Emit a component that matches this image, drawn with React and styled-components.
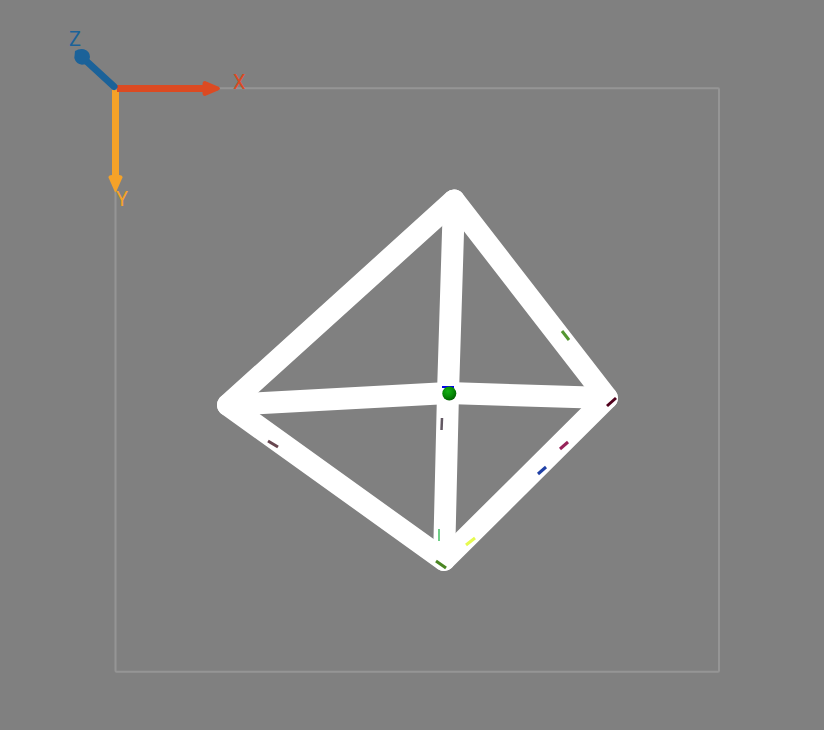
import React from "react";
import styled, { createGlobalStyle } from "styled-components";

const GlobalStyle = createGlobalStyle`
  body {
    margin: 0;
    background: #808080;
  }
`;

const Viewport = styled.main`
  display: flex;
  width: 100%;
  height: 100vh;
  overflow: hidden;
  background: #808080;
`;

const Scene = styled.svg`
  display: block;
  width: 100%;
  height: 100%;
`;

const Bounds = styled.rect`
  fill: none;
  stroke: #959595;
  stroke-width: 2px;
`;

const Beam = styled.path`
  fill: none;
  stroke: #ffffff;
  stroke-width: 22px;
  stroke-linecap: round;
  stroke-linejoin: round;
`;

const Mark = styled.line`
  stroke: ${(p) => p.$color};
  stroke-width: ${(p) => p.$weight || 3}px;
`;

const Axis = styled.g`
  fill: ${(p) => p.$color};
  stroke: none;
`;

const Shaft = styled.line`
  stroke: ${(p) => p.$color};
  stroke-width: 7px;
  stroke-linecap: ${(p) => p.$cap || "butt"};
`;

const AxisLabel = styled.text`
  font-family: Roboto, "Liberation Sans", sans-serif;
  font-size: 20px;
  font-weight: 400;
`;

const COLORS = { x: "#dc4a22", y: "#f5a228", z: "#1b6299" };

const MARKS = [
  { color: "#549632", from: [562, 331], to: [569, 340] },
  { color: "#50001c", from: [607, 406], to: [616, 398] },
  { color: "#98235a", from: [560, 449], to: [568, 442] },
  { color: "#2041a6", from: [538, 474], to: [546, 467] },
  { color: "#e6fa50", from: [466, 545], to: [475, 538] },
  { color: "#4a8622", from: [436, 561], to: [446, 568] },
  { color: "#70cf87", from: [439, 529], to: [439, 541], weight: 2 },
  { color: "#625862", from: [442, 418], to: [441.5, 430], weight: 2.5 },
  { color: "#684750", from: [268, 441], to: [278, 447] },
  { color: "#0505e8", from: [442, 387], to: [454, 387], weight: 2 },
];

export default function App() {
  return (
    <>
      <GlobalStyle />
      <Viewport>
        <Scene viewBox="0 0 824 730" role="img" aria-label="Wireframe model with X, Y and Z axes">
          <defs>
            <radialGradient id="node-shade" cx="0.4" cy="0.34" r="0.72">
              <stop offset="0" stopColor="#14b014" />
              <stop offset="0.5" stopColor="#079007" />
              <stop offset="1" stopColor="#005800" />
            </radialGradient>
          </defs>
          <Bounds x="115.5" y="88.3" width="603.5" height="583.5" rx="1" />
          <Axis $color={COLORS.y}>
            <Shaft $color={COLORS.y} x1="115.5" y1="90" x2="115.5" y2="177" />
            <path d="M108.3 177 Q109 175 112 175 H119 Q122 175 122.7 177 L117 190 Q115.5 194 114 190Z" />
            <AxisLabel x="116" y="206">Y</AxisLabel>
          </Axis>
          <Axis $color={COLORS.x}>
            <Shaft $color={COLORS.x} x1="117" y1="88.5" x2="204" y2="88.5" />
            <path d="M202.5 84 Q202.5 81 205 81 L218 86.5 Q222 88.5 218 90.5 L205 96 Q202.5 96 202.5 93Z" />
            <AxisLabel x="233" y="89">X</AxisLabel>
          </Axis>
          <Axis $color={COLORS.z}>
            <Shaft $color={COLORS.z} $cap="round" x1="83" y1="58" x2="114" y2="86.5" />
            <path d="M75 51 Q79 48.5 84 49.3 Q90 51.5 90 57 Q89 64.5 82 64.7 Q76 64 74.3 58Z" />
            <AxisLabel x="69" y="46">Z</AxisLabel>
          </Axis>
          <Beam d="M454 200.5 L607 398 L444 560 L228 405 Z" />
          <Beam d="M454 200.5 L448 393 L444 560" />
          <Beam d="M228 405 L448 393 L607 398" />
          {MARKS.map(({ color, from, to, weight }) => (
            <Mark key={color} $color={color} $weight={weight}
              x1={from[0]} y1={from[1]} x2={to[0]} y2={to[1]} />
          ))}
          <circle cx="449.3" cy="393.5" r="7" fill="url(#node-shade)" />
        </Scene>
      </Viewport>
    </>
  );
}
